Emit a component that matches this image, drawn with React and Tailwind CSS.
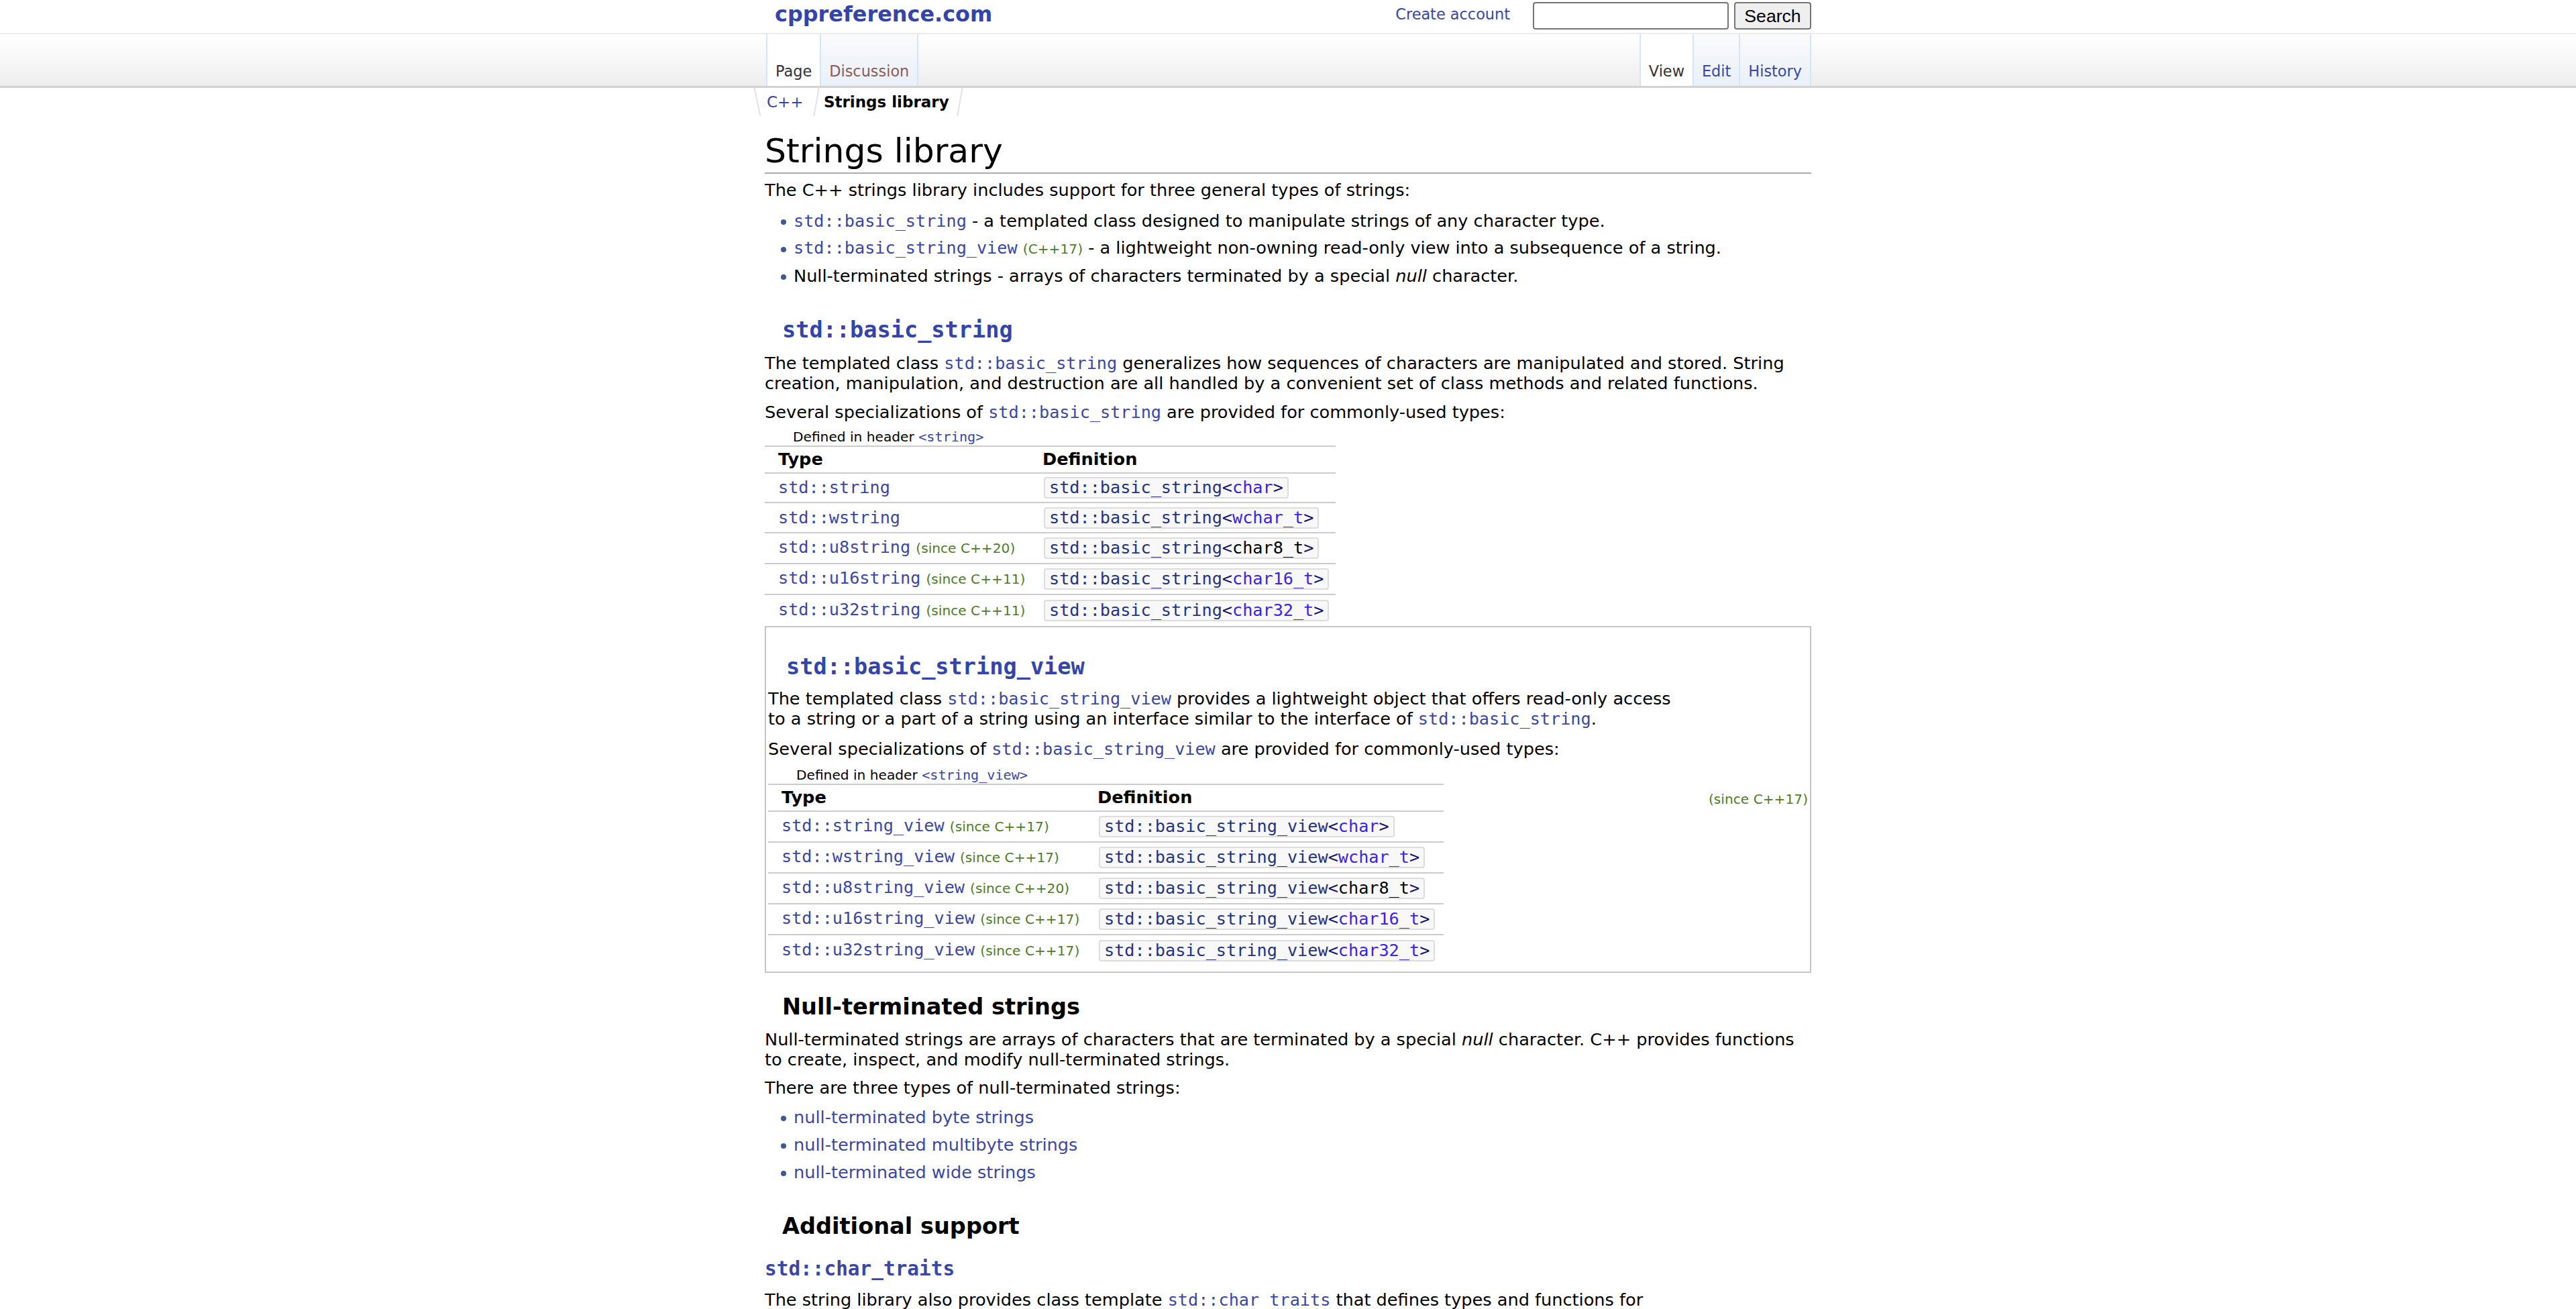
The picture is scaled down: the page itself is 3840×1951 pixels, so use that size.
import React from "react";

const mono = "font-['DejaVu_Sans_Mono',monospace]";
const link = "text-[#3a47a5]";

function Code({ children, className = "" }) {
  return <span className={`${mono} text-[25.2px] ${link} ${className}`}>{children}</span>;
}

function Since({ children }) {
  return <span className="text-[20.16px] text-[#4c7c25]">{children}</span>;
}

function Bullet({ children }) {
  return (
    <li className="flex items-center h-[41px] pl-[24px] whitespace-nowrap">
      <span className="w-[8px] h-[8px] rounded-full bg-[#3d5a8f] mr-[11px] mt-[2px] shrink-0" />
      <span>{children}</span>
    </li>
  );
}

function Def({ base, arg, kw = true }) {
  return (
    <span className={`ml-[3px] inline-flex items-center h-[32px] px-[6px] border-2 border-[#dddddd] rounded-[4px] bg-[#f8f8f8] ${mono} text-[25.2px] leading-[28px]`}>
      <span className="text-[#233384]">{base}</span>
      <span className="text-[#101070]">&lt;</span>
      <span className={kw ? "text-[#3b24e8]" : "text-black"}>{arg}</span>
      <span className="text-[#101070]">&gt;</span>
    </span>
  );
}

function SpecTable({ header, rows, width, col1, heights, gap }) {
  return (
    <>
      <div className={`${gap} pl-[42px] text-[20.16px] leading-[26px]`}>
        Defined in header <span className={`${mono} ${link}`}>&lt;{header}&gt;</span>
      </div>
      <div className={`${width} border-t-2 border-[#cccccc]`}>
        <div className="flex pt-[4px] pb-[5px] font-bold leading-[29.5px] border-b-2 border-[#cccccc]">
          <div className={`${col1} pl-[20px]`}>Type</div>
          <div className="pl-[1px]">Definition</div>
        </div>
        {rows.map((r, i) => (
          <div
            key={r.type}
            className={`flex items-center box-border ${heights[i]} ${i < rows.length - 1 ? "border-b-2 border-[#cccccc]" : ""}`}
          >
            <div className={`${col1} pl-[20px] whitespace-nowrap`}>
              <Code>{r.type}</Code>
              {r.since && <> <Since>{r.since}</Since></>}
            </div>
            <div>
              <Def base={r.base} arg={r.arg} kw={r.kw} />
            </div>
          </div>
        ))}
      </div>
    </>
  );
}

const stringRows = [
  { type: "std::string", base: "std::basic_string", arg: "char" },
  { type: "std::wstring", base: "std::basic_string", arg: "wchar_t" },
  { type: "std::u8string", since: "(since C++20)", base: "std::basic_string", arg: "char8_t", kw: false },
  { type: "std::u16string", since: "(since C++11)", base: "std::basic_string", arg: "char16_t" },
  { type: "std::u32string", since: "(since C++11)", base: "std::basic_string", arg: "char32_t" },
];

const viewRows = [
  { type: "std::string_view", since: "(since C++17)", base: "std::basic_string_view", arg: "char" },
  { type: "std::wstring_view", since: "(since C++17)", base: "std::basic_string_view", arg: "wchar_t" },
  { type: "std::u8string_view", since: "(since C++20)", base: "std::basic_string_view", arg: "char8_t", kw: false },
  { type: "std::u16string_view", since: "(since C++17)", base: "std::basic_string_view", arg: "char16_t" },
  { type: "std::u32string_view", since: "(since C++17)", base: "std::basic_string_view", arg: "char32_t" },
];

function Tab({ children, active, color, first }) {
  return (
    <div
      className={`h-full flex items-end pb-[7px] px-[12px] leading-[29px] border-[#d6e5f6] ${first ? "border-l-2" : ""} border-r-2 ${
        active ? "bg-white" : "bg-linear-to-b from-[#fbfbfb] to-[#e8f0f9]"
      } ${color}`}
    >
      {children}
    </div>
  );
}

export default function App() {
  return (
    <div className="min-h-screen bg-white text-black font-['DejaVu_Sans',sans-serif] text-[22.4px] leading-[29px]">
      {/* top row */}
      <div className="w-[1560px] mx-auto h-[49px] flex items-start">
        <div className="pl-[15px] pt-[3px] text-[31.9px] leading-[36px] font-bold text-[#3344aa]">
          cppreference.com
        </div>
        <div className="ml-auto mt-[7px] text-[#3a47a5]">Create account</div>
        <input
          className="ml-[34px] mt-[3px] w-[292px] h-[41px] border-2 border-[#767676] rounded-[4px] bg-white"
          aria-label="search"
        />
        <button className="ml-[8px] mt-[3px] w-[115px] h-[41px] border-2 border-[#767676] rounded-[4px] bg-[#efefef] font-['Liberation_Sans',Arial,sans-serif] text-[26.6px] leading-[30px]">
          Search
        </button>
      </div>

      {/* tab bar */}
      <div className="w-full border-t-2 border-[#ececec] border-b-[3px] border-b-[#d2d2d2] bg-linear-to-b from-white to-[#eeeeee]">
        <div className="w-[1560px] mx-auto h-[77px] flex justify-between">
          <div className="flex h-full ml-[2px]">
            <Tab active first color="text-[#333333]">Page</Tab>
            <Tab color="text-[#8d5a54]">Discussion</Tab>
          </div>
          <div className="flex h-full">
            <Tab active first color="text-[#333333]">View</Tab>
            <Tab color="text-[#3a47a5]">Edit</Tab>
            <Tab color="text-[#3a47a5]">History</Tab>
          </div>
        </div>
      </div>

      <div className="w-[1560px] mx-auto">
        {/* breadcrumb */}
        <div className="flex h-[42px] -ml-[12px] text-[23px]">
          <div className="skew-x-[12deg] border-l-2 border-[#e2e2e2]" />
          <div className="-skew-x-[10deg] border-r-2 border-[#e2e2e2] pl-[13px] pr-[18px] flex items-center">
            <span className="skew-x-[10deg] text-[#3a47a5]">C++</span>
          </div>
          <div className="-skew-x-[10deg] border-r-2 border-[#e2e2e2] pl-[10px] pr-[15px] flex items-center">
            <span className="skew-x-[10deg] font-bold">Strings library</span>
          </div>
        </div>

        <h1 className="mt-[23px] text-[50.4px] leading-[58.7px] pb-[2px] border-b-2 border-[#aaaaaa]">
          Strings library
        </h1>

        <div className="text-[25.6px] leading-[29.5px]">
          <p className="mt-[10px]">The C++ strings library includes support for three general types of strings:</p>
          <ul className="mt-[11px]">
            <Bullet>
              <Code>std::basic_string</Code> - a templated class designed to manipulate strings of any character type.
            </Bullet>
            <Bullet>
              <Code>std::basic_string_view</Code> <Since>(C++17)</Since> - a lightweight non-owning read-only view into
              a subsequence of a string.
            </Bullet>
            <Bullet>
              Null-terminated strings - arrays of characters terminated by a special <i>null</i> character.
            </Bullet>
          </ul>

          <h3 className={`mt-[40px] pl-[26px] ${mono} font-bold text-[33.6px] leading-[39px] text-[#3344aa]`}>
            std::basic_string
          </h3>
          <p className="mt-[16px] whitespace-nowrap">
            The templated class <Code>std::basic_string</Code> generalizes how sequences of characters are manipulated
            and stored. String
            <br />
            creation, manipulation, and destruction are all handled by a convenient set of class methods and related
            functions.
          </p>
          <p className="mt-[14px]">
            Several specializations of <Code>std::basic_string</Code> are provided for commonly-used types:
          </p>
          <SpecTable
            header="string"
            rows={stringRows}
            width="w-[851px]"
            col1="w-[413px]"
            gap="mt-[8px]"
            heights={["h-[44px]", "h-[45px]", "h-[46px]", "h-[46px]", "h-[46px]"]}
          />

          {/* string_view box */}
          <div className="flex border-2 border-[#c6c6c6]">
            <div className="w-[1364px] pl-[3px] pt-[39px] pb-[8px]">
              <h3 className={`pl-[27px] ${mono} font-bold text-[33.6px] leading-[39px] text-[#3344aa]`}>
                std::basic_string_view
              </h3>
              <p className="mt-[14px] whitespace-nowrap">
                The templated class <Code>std::basic_string_view</Code> provides a lightweight object that offers
                read-only access
                <br />
                to a string or a part of a string using an interface similar to the interface of{" "}
                <Code>std::basic_string</Code>.
              </p>
              <p className="mt-[16px]">
                Several specializations of <Code>std::basic_string_view</Code> are provided for commonly-used types:
              </p>
              <SpecTable
                header="string_view"
                rows={viewRows}
                width="w-[1007px]"
                col1="w-[490px]"
                gap="mt-[10px]"
                heights={["h-[46px]", "h-[46px]", "h-[46px]", "h-[46px]", "h-[46px]"]}
              />
            </div>
            <div className="flex-1 flex items-center justify-end pr-[3px]">
              <Since>(since C++17)</Since>
            </div>
          </div>

          <h3 className="mt-[31px] pl-[26px] font-bold text-[33.6px] leading-[39px]">Null-terminated strings</h3>
          <p className="mt-[15px] whitespace-nowrap">
            Null-terminated strings are arrays of characters that are terminated by a special <i>null</i> character.
            C++ provides functions
            <br />
            to create, inspect, and modify null-terminated strings.
          </p>
          <p className="mt-[13px]">There are three types of null-terminated strings:</p>
          <ul className="mt-[9px]">
            <Bullet>
              <span className={link}>null-terminated byte strings</span>
            </Bullet>
            <Bullet>
              <span className={link}>null-terminated multibyte strings</span>
            </Bullet>
            <Bullet>
              <span className={link}>null-terminated wide strings</span>
            </Bullet>
          </ul>

          <h3 className="mt-[39px] pl-[26px] font-bold text-[33.6px] leading-[39px]">Additional support</h3>
          <h5 className={`mt-[27px] ${mono} font-bold text-[29.4px] leading-[34px] ${link}`}>std::char_traits</h5>
          <p className="mt-[15px] pb-[40px] whitespace-nowrap">
            The string library also provides class template <Code>std::char_traits</Code> that defines types and
            functions for
            <br />
            <Code>std::basic_string</Code> and <Code>std::basic_string_view</Code>.
          </p>
        </div>
      </div>
    </div>
  );
}
